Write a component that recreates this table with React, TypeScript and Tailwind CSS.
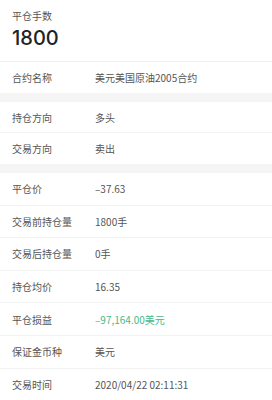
const font = { fontFamily: '"Noto Sans CJK SC", "Noto Sans", sans-serif' };

type Row = { label: string; value: string; green?: boolean };

const groups: { h: string; rows: Row[] }[] = [
  { h: 'h-[31px]', rows: [{ label: '合约名称', value: '美元美国原油2005合约' }] },
  {
    h: 'h-[31px]',
    rows: [
      { label: '持仓方向', value: '多头' },
      { label: '交易方向', value: '卖出' },
    ],
  },
  {
    h: 'h-[32.6px]',
    rows: [
      { label: '平仓价', value: '–37.63' },
      { label: '交易前持仓量', value: '1800手' },
      { label: '交易后持仓量', value: '0手' },
      { label: '持仓均价', value: '16.35' },
      { label: '平仓损益', value: '–97,164.00美元', green: true },
      { label: '保证金币种', value: '美元' },
      { label: '交易时间', value: '2020/04/22 02:11:31' },
    ],
  },
];

export default function App() {
  return (
    <div className="w-[272px] h-[400px] overflow-hidden bg-white" style={font}>
      {/* header */}
      <div className="px-3 pt-[10px] h-[62px] border-b border-[#f0f0f0]">
        <div className="text-[10px] leading-[12px] text-[#555]">平仓手数</div>
        <div
          className="mt-[4px] text-[20px] leading-[24px] font-medium text-[#222]"
          style={{ fontFamily: '"Inter", "Noto Sans", sans-serif' }}
        >
          1800
        </div>
      </div>

      {groups.map((g, gi) => (
        <div key={gi}>
          {gi > 0 && <div className="h-[9px] bg-[#f5f5f5]" />}
          {g.rows.map((r, ri) => (
            <div
              key={r.label}
              className={`flex items-center px-3 ${g.h} ${ri < g.rows.length - 1 ? 'border-b border-[#f2f2f2]' : ''}`}
            >
              <div className="w-[83px] text-[10px] text-[#555]">{r.label}</div>
              <div className={`text-[10px] ${r.green ? 'text-[#46b98a]' : 'text-[#555]'}`}>{r.value}</div>
            </div>
          ))}
        </div>
      ))}
    </div>
  );
}
